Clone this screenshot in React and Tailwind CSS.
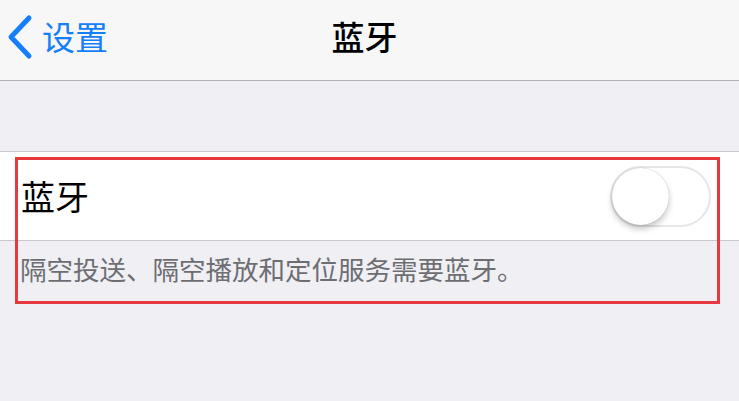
const cjk = { fontFamily: '"Noto Sans CJK SC", "Noto Sans", sans-serif' };

function Toggle() {
  return (
    <div className="flex h-[61px] w-[101px] items-center rounded-full border-2 border-[#e6e6e9] bg-white">
      <div className="h-[57px] w-[57px] rounded-full bg-white shadow-[0_4px_6px_rgba(0,0,0,0.22),0_0_1px_rgba(0,0,0,0.3)]" />
    </div>
  );
}

export default function App() {
  return (
    <div className="relative h-[401px] w-[739px] overflow-hidden bg-[#efeff4]" style={cjk}>
      <header className="relative flex h-[81px] items-center border-b border-[#b2b2b2] bg-[#f7f7f8] pb-[7px]">
        <div className="flex items-center pl-[4px] text-[#157efb]">
          <svg width="30" height="46" viewBox="0 0 30 46" fill="none">
            <path d="M25 4 L7 23 L25 42" stroke="currentColor" strokeWidth="5" strokeLinecap="round" strokeLinejoin="round" />
          </svg>
          <span className="ml-[8px] text-[33px] leading-none">设置</span>
        </div>
        <h1 className="absolute inset-x-0 pr-[10px] text-center text-[33px] font-medium leading-none text-black">蓝牙</h1>
      </header>

      <div className="mt-[70px] border-y border-[#c8c7cc] bg-white">
        <div className="flex h-[88px] items-center justify-between pl-[21px] pr-[28px]">
          <span className="text-[34px] leading-none text-black">蓝牙</span>
          <Toggle />
        </div>
      </div>

      <p className="pl-[20px] pt-[15px] text-[26.5px] leading-none text-[#6d6d72]">
        隔空投送、隔空播放和定位服务需要蓝牙。
      </p>

      <div className="pointer-events-none absolute left-[15px] top-[157px] h-[147px] w-[705px] border-[3px] border-[#e5383f]" />
    </div>
  );
}
